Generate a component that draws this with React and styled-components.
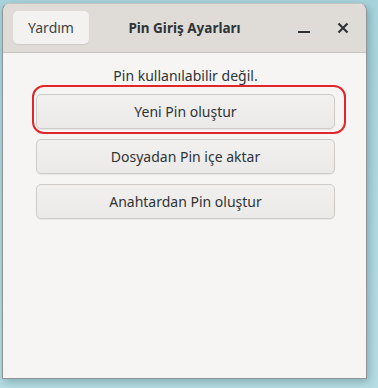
import React from "react";
import styled, { createGlobalStyle } from "styled-components";

const Global = createGlobalStyle`
  html, body {
    margin: 0;
    padding: 0;
  }
  body {
    width: 378px;
    height: 388px;
    overflow: hidden;
    background: linear-gradient(180deg, #a9d3dc 0%, #b7dde4 100%);
    font-family: "Noto Sans", "Liberation Sans", sans-serif;
  }
`;

const Desktop = styled.div`
  width: 378px;
  height: 388px;
  padding: 3px 0 0 2px;
  box-sizing: border-box;
`;

const Window = styled.div`
  width: 365px;
  height: 376px;
  display: flex;
  flex-direction: column;
  background: #f6f5f4;
  border-radius: 8px 8px 0 0;
  border: 1px solid #8f9596;
  border-top-color: #c7c4c0;
  box-sizing: border-box;
  box-shadow: 2px 3px 8px rgba(40, 80, 90, 0.35);
  overflow: hidden;
`;

const HeaderBar = styled.div`
  height: 49px;
  flex: none;
  display: grid;
  grid-template-columns: 1fr auto 1fr;
  align-items: center;
  padding: 0 10px;
  background: #dfdcd8;
  border-bottom: 1px solid #c8c3be;
  box-sizing: border-box;
`;

const HelpButton = styled.button`
  justify-self: start;
  width: 76px;
  height: 33px;
  margin-top: -1px;
  border: none;
  border-radius: 5px;
  background: #f3f2f1;
  box-shadow: 0 1px 1px rgba(0, 0, 0, 0.08);
  color: #3d4345;
  font-family: inherit;
  font-size: 14px;
  padding: 0;
`;

const Title = styled.div`
  font-weight: bold;
  font-size: 13.5px;
  color: #2e3436;
`;

const Controls = styled.div`
  justify-self: end;
  display: flex;
  align-items: center;
  gap: 25px;
  padding-right: 6px;
`;

const IconButton = styled.span`
  display: flex;
  width: 14px;
  height: 14px;
  align-items: center;
  justify-content: center;
`;

const Body = styled.div`
  display: flex;
  flex-direction: column;
  align-items: center;
  padding: 13px 31px 0 33px;
`;

const Status = styled.div`
  font-size: 14px;
  color: #2e3436;
  margin-bottom: 9px;
  line-height: 19px;
`;

const ButtonList = styled.div`
  display: flex;
  flex-direction: column;
  gap: 10px;
  width: 100%;
`;

const ActionWrap = styled.div`
  position: relative;
`;

const ActionButton = styled.button`
  width: 100%;
  height: 35px;
  border: 1px solid #cfcac5;
  border-radius: 5px;
  background: linear-gradient(180deg, #f1f0ef 0%, #eceae8 100%);
  box-shadow: 0 1px 1px rgba(0, 0, 0, 0.06);
  color: #2e3436;
  font-family: inherit;
  font-size: 14px;
  padding: 0;
`;

const Highlight = styled.div`
  position: absolute;
  left: -4px;
  right: -11px;
  top: -9px;
  bottom: -5px;
  border: 2px solid #e0262b;
  border-radius: 12px;
  pointer-events: none;
`;

const actions = ["Yeni Pin oluştur", "Dosyadan Pin içe aktar", "Anahtardan Pin oluştur"];

export default function App() {
  return (
    <>
      <Global />
      <Desktop>
        <Window>
          <HeaderBar>
            <HelpButton>Yardım</HelpButton>
            <Title>Pin Giriş Ayarları</Title>
            <Controls>
              <IconButton>
                <svg width="14" height="14" viewBox="0 0 14 14">
                  <rect x="1" y="10" width="12" height="2" fill="#2e3436" />
                </svg>
              </IconButton>
              <IconButton>
                <svg width="14" height="14" viewBox="0 0 14 14">
                  <path d="M2.5 2.5 L11.5 11.5 M11.5 2.5 L2.5 11.5" stroke="#2e3436" strokeWidth="2.2" />
                </svg>
              </IconButton>
            </Controls>
          </HeaderBar>
          <Body>
            <Status>Pin kullanılabilir değil.</Status>
            <ButtonList>
              {actions.map((label, i) => (
                <ActionWrap key={label}>
                  <ActionButton>{label}</ActionButton>
                  {i === 0 && <Highlight />}
                </ActionWrap>
              ))}
            </ButtonList>
          </Body>
        </Window>
      </Desktop>
    </>
  );
}
